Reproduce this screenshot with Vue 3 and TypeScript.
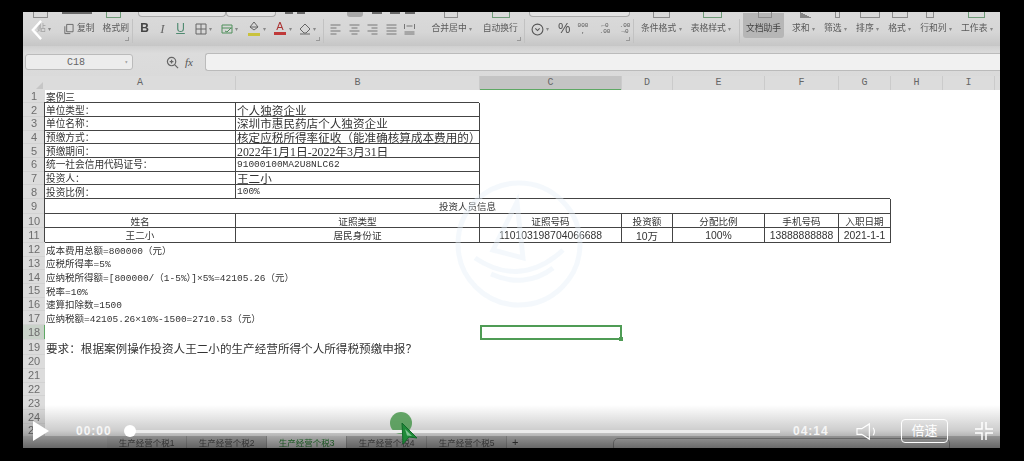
<template>
  <div class="page">
    <div class="screen">
      <!-- ribbon -->
      <div class="ribbon">
        <div class="stubs">
          <i
            v-for="s in stubs"
            :key="s.x"
            class="stub"
            :class="s.kind"
            :style="{ marginLeft: `${s.gap}px`, width: `${s.w}px` }"
          ></i>
        </div>
        <div class="bands">
          <div class="group clip-group">
            <span class="rb-text paste">贴 <small>▾</small></span>
            <svg class="ic copy-ic" viewBox="0 0 12 12"><path d="M4 1h7v8H4zM2 3v8h6" /></svg>
            <span class="rb-text">复制</span>
            <span class="rb-text brush">格式刷</span>
            <i class="launch"></i>
          </div>
          <div class="group font-group">
            <b class="fmt bold">B</b>
            <i class="fmt italic">I</i>
            <u class="fmt under">U</u>
            <span class="pair first">
              <svg class="ic" viewBox="0 0 12 12"><path d="M1 1h10v10H1zM6 1v10M1 6h10" /></svg>
              <small>▾</small>
            </span>
            <span class="pair">
              <svg class="ic green" viewBox="0 0 12 12"><path d="M1 2h10v8H1zM1 5h10M4 8l2 1 4-4" /></svg>
              <small>▾</small>
            </span>
            <span class="pair">
              <span class="bucket">
                <svg class="ic" viewBox="0 0 12 12"><path d="M6 1l4 5-4 3-4-3zM2 6h8" /></svg>
                <i class="bar yellow"></i>
              </span>
              <small>▾</small>
            </span>
            <span class="pair">
              <span class="bucket">
                <span class="font-a">A</span>
                <i class="bar red"></i>
              </span>
              <small>▾</small>
            </span>
            <span class="pair">
              <svg class="ic" viewBox="0 0 12 12"><path d="M6 1l5 5-4 4H5L1 6zM1 11h10" /></svg>
              <small>▾</small>
            </span>
            <i class="launch"></i>
          </div>
          <div class="group align-group">
            <svg v-for="a in alignIcons" :key="a" class="ic small" viewBox="0 0 12 12"><path :d="a" /></svg>
            <span class="rb-text merge">合并居中 <small>▾</small></span>
            <span class="rb-text">自动换行</span>
            <i class="launch"></i>
          </div>
          <div class="group num-group">
            <svg class="ic round" viewBox="0 0 12 12"><circle cx="6" cy="6" r="5" /><path d="M4 5l2 2 2-2" /></svg>
            <small class="caret">▾</small>
            <span class="percent">%</span>
            <span class="tiny">000<br />,</span>
            <span class="tiny wide">←0<br />.00</span>
            <span class="tiny">.00<br />→0</span>
            <i class="launch"></i>
          </div>
          <div class="group style-group">
            <span class="rb-text">条件格式 <small>▾</small></span>
            <span class="rb-text">表格样式 <small>▾</small></span>
          </div>
          <div class="group tools-group">
            <span class="rb-text helper">文档助手</span>
            <span v-for="t in tools" :key="t" class="rb-text">{{ t }} <small>▾</small></span>
          </div>
        </div>
      </div>

      <!-- formula bar -->
      <div class="formula">
        <div class="namebox"><span>C18</span><small>▾</small></div>
        <svg class="zoom-ic" viewBox="0 0 14 14">
          <circle cx="6" cy="6" r="4.5" />
          <path d="M9.500 9.500L13 13M4 6h4M6 4v4" />
        </svg>
        <span class="fx">fx</span>
        <div class="input"></div>
      </div>

      <!-- column headers -->
      <div class="sheet cols">
        <div class="corner"><i></i></div>
        <div v-for="c in columns" :key="c" class="col-head" :class="{ active: c === 'C' }">{{ c }}</div>
      </div>

      <!-- grid -->
      <div class="sheet grid">
        <template v-for="row in rows" :key="row.n">
          <div class="row-head" :class="{ active: row.n === 18 }">{{ row.n }}</div>
          <div
            v-for="(cell, i) in row.cells"
            :key="i"
            class="cell"
            :class="cell.cls"
            :style="{ gridColumn: `span ${cell.span || 1}` }"
          >{{ cell.text }}</div>
        </template>
      </div>

      <!-- sheet tabs -->
      <div class="tabs">
        <div class="tab-nav"></div>
        <div v-for="t in sheets" :key="t" class="tab" :class="{ on: t.endsWith('3') }">{{ t }}</div>
        <span class="add">+</span>
        <div class="hscroll"><i></i></div>
      </div>

      <!-- watermark in the video -->
      <svg class="mark" viewBox="0 0 128 128">
        <circle cx="64" cy="64" r="61" />
        <path d="M62 22l6 56-30-8zM20 78c30 20 60 18 88-8M36 94c22 10 44 8 62-6" />
      </svg>

      <!-- player overlay -->
      <div class="fade"></div>
      <svg class="back" viewBox="0 0 14 24"><path d="M12 2L3 12l9 10" /></svg>
      <div class="dot"></div>
      <div class="controls">
        <svg class="play" viewBox="0 0 16 20"><path d="M0 0l16 10L0 20z" /></svg>
        <span class="time first">00:00</span>
        <div class="track"><i></i></div>
        <span class="time">04:14</span>
        <svg class="sound" viewBox="0 0 22 20"><path d="M1 7h5l8-5v16l-8-5H1zM18 6c1.600 2.500 1.600 5.500 0 8" /></svg>
        <span class="speed">倍速</span>
        <svg class="shrink" viewBox="0 0 18 18"><path d="M7 0v7H0M11 0v7h7M7 18v-7H0M11 18v-7h7" /></svg>
      </div>
      <svg class="cursor" viewBox="0 0 20 24">
        <path d="M2 2l15 15-8-1-6 7z" />
        <path class="in" d="M5 8l7 7-5-.5z" />
      </svg>
    </div>
  </div>
</template>

<script setup lang="ts">
type Cell = { text?: string; span?: number; cls?: string };
type Row = { n: number; cells: Cell[] };

const columns = ['A', 'B', 'C', 'D', 'E', 'F', 'G', 'H', 'I'];
const tools = ['求和', '筛选', '排序', '格式', '行和列', '工作表'];
const sheets = ['生产经营个税1', '生产经营个税2', '生产经营个税3', '生产经营个税4', '生产经营个税5'];
const alignIcons = [
  'M1 2h10M1 5h6M1 8h10M1 11h6',
  'M1 2h10M3 5h6M1 8h10M3 11h6',
  'M1 2h10M5 5h6M1 8h10M5 11h6',
  'M1 2h10M1 5h10M1 8h10M1 11h10',
  'M1 1v5M11 1v5M3 3h6M1 9h10M1 11h10',
];

// bottoms of the ribbon icons that the video crop leaves visible, by page x
const stubSpots: [number, number, string][] = [
  [33, 15, 'box'], [62, 30, 'dark'], [106, 15, 'box green'], [138, 88, 'dd'], [226, 50, 'dd'],
  [285, 8, 'dark'], [297, 8, 'dark'], [347, 16, 'sel'], [372, 10, 'dark'], [390, 10, 'dark'], [405, 10, 'dark'],
  [444, 14, 'box'], [492, 18, 'box green'], [529, 101, 'dd'], [653, 17, 'box'], [703, 19, 'box green'],
  [758, 14, 'box'], [800, 12, 'dark thin'], [835, 5, 'box'], [860, 20, 'box'], [892, 16, 'box'],
  [926, 8, 'box'], [968, 17, 'box green'],
];
let stubEnd = 23;
const stubs = stubSpots.map(([x, w, kind]) => {
  const gap = x - stubEnd;
  stubEnd = x + w;
  return { x, w, kind, gap };
});

const info: [string, string, string?][] = [
  ['单位类型：', '个人独资企业'],
  ['单位名称：', '深圳市惠民药店个人独资企业'],
  ['预缴方式：', '核定应税所得率征收（能准确核算成本费用的）'],
  ['预缴期间：', '2022年1月1日-2022年3月31日', 'serif'],
  ['统一社会信用代码证号：', '91000100MA2U8NLC62', 'mono'],
  ['投资人：', '王二小'],
  ['投资比例：', '100%', 'mono'],
];
const notes = [
  '成本费用总额=800000（元）',
  '应税所得率=5%',
  '应纳税所得额=[800000/（1-5%）]×5%=42105.26（元）',
  '税率=10%',
  '速算扣除数=1500',
  '应纳税额=42105.26×10%-1500=2710.53（元）',
];
const headCols = ['姓名', '证照类型', '证照号码', '投资额', '分配比例', '手机号码', '入职日期'];
const valueCols: [string, string][] = [
  ['王二小', 'cjk'],
  ['居民身份证', 'cjk'],
  ['110103198704066688', 'num'],
  ['10万', 'num'],
  ['100%', 'num'],
  ['13888888888', 'num'],
  ['2021-1-1', 'num'],
];

const rows: Row[] = [{ n: 1, cells: [{ text: '案例三', span: 10, cls: 'small' }] }];
info.forEach(([label, value, cls], i) => {
  rows.push({
    n: i + 2,
    cells: [
      { text: label, cls: 'small line' },
      { text: value, cls: `big line ${cls || ''}` },
      { span: 8 },
    ],
  });
});
rows.push({ n: 9, cells: [{ text: '投资人员信息', span: 7, cls: 'center line banner' }, { span: 3 }] });
rows.push({
  n: 10,
  cells: [...headCols.map((text) => ({ text, cls: 'center line cjk' })), { span: 3 }],
});
rows.push({
  n: 11,
  cells: [...valueCols.map(([text, cls]) => ({ text, cls: `center line ${cls}` })), { span: 3 }],
});
notes.forEach((text, i) => {
  rows.push({ n: i + 12, cells: [{ text, span: 10, cls: 'mono-note' }] });
});
rows.push({ n: 18, cells: [{ span: 2 }, { cls: 'selected' }, { span: 7 }] });
rows.push({ n: 19, cells: [{ text: '要求：根据案例操作投资人王二小的生产经营所得个人所得税预缴申报？', span: 10, cls: 'ask' }] });
for (let n = 20; n <= 25; n++) rows.push({ n, cells: [{ span: 10 }] });
</script>

<style>
body {
  margin: 0;
  background: #000;
}
</style>

<style scoped>
.page {
  width: 1024px;
  height: 461px;
  box-sizing: border-box;
  padding: 12px 24px 13px 23px;
  background: #000;
  overflow: hidden;
  font-family: "Liberation Sans", "Noto Sans CJK SC", sans-serif;
  color: #333;
}
.screen {
  position: relative;
  height: 100%;
  display: flex;
  flex-direction: column;
  overflow: hidden;
  background: #fff;
}

/* ribbon */
.ribbon {
  height: 34px;
  flex: none;
  background: linear-gradient(#dadada, #d6d6d6 60%, #c6c6c6);
  filter: blur(0.5px);
  overflow: hidden;
}
.stubs {
  position: relative;
  z-index: 1;
  height: 7px;
  display: flex;
  align-items: flex-start;
}
.stub {
  flex: none;
  display: block;
  box-sizing: border-box;
}
.stub.box {
  height: 6px;
  border: 1px solid #8d8d8d;
  border-top: none;
}
.stub.box.green { border-color: #6f9a78; }
.stub.dark { height: 2px; background: #6a6a6a; }
.stub.dark.thin { height: 6px; background: linear-gradient(to top right, #888 50%, transparent 50%); }
.stub.sel { height: 5px; background: #a8a8a8; border-radius: 0 0 3px 3px; }
.stub.dd {
  height: 5px;
  border: 1px solid #aaa;
  border-top: none;
  border-radius: 0 0 4px 4px;
  background: #e2e2e2;
}
.bands { display: flex; }
.group {
  position: relative;
  flex: none;
  display: flex;
  align-items: flex-start;
  height: 24px;
  padding-top: 1px;
  box-sizing: border-box;
  border-right: 1px solid #c2c2c2;
}
.clip-group { width: 110px; padding-left: 14px; gap: 3px; }
.font-group { width: 191px; padding-left: 5px; gap: 5px; }
.align-group { width: 201px; padding-left: 5px; gap: 5.500px; }
.num-group { width: 109px; padding-left: 6px; gap: 5px; }
.style-group { width: 106px; padding-left: 7px; gap: 9px; }
.tools-group { width: 259px; border: none; gap: 9px; padding-left: 3px; }
.launch {
  position: absolute;
  right: 3px;
  bottom: 2px;
  width: 3px;
  height: 3px;
  border-right: 1px solid #999;
  border-bottom: 1px solid #999;
}
.rb-text {
  font-size: 8.800px;
  line-height: 17px;
  white-space: nowrap;
  color: #5a5a5a;
}
.rb-text small { font-size: 6px; color: #888; }
.paste { width: 19px; color: #a0a0a0; margin-right: 4px; }
.brush { margin-left: 5px; }
.merge { margin-left: 10px; margin-right: 5px; }
.helper {
  background: #b6b6b6;
  margin-top: -7px;
  margin-right: -1px;
  padding-top: 7px;
  padding-bottom: 1px;
  width: 41px;
  text-align: center;
  border-radius: 0 0 3px 3px;
  color: #444;
}
.ic {
  width: 12px;
  height: 12px;
  margin-top: 3px;
  flex: none;
  fill: none;
  stroke: #666;
  stroke-width: 1;
}
.ic.small { width: 13px; stroke: #777; }
.ic.green { stroke: #4e8f5a; }
.ic.round { width: 13px; height: 13px; stroke: #555; }
.copy-ic { width: 11px; }
.fmt {
  width: 13px;
  text-align: center;
  font-size: 12px;
  line-height: 17px;
  color: #444;
}
.italic { font-family: "Liberation Serif", serif; font-size: 13px; color: #666; }
.under { color: #4f8a70; }
.pair {
  width: 21px;
  flex: none;
  display: flex;
  gap: 2px;
}
.pair.first { margin-left: 3px; }
.pair small, .caret {
  font-size: 6px;
  line-height: 18px;
  color: #888;
}
.caret { margin-left: -3px; margin-right: 4px; }
.bucket {
  width: 14px;
  height: 15px;
  flex: none;
  display: flex;
  flex-direction: column;
  align-items: center;
}
.bucket .ic { margin-top: 1px; }
.bar { width: 12px; height: 3px; flex: none; }
.yellow { background: #c9c23c; }
.red { background: #c03a3a; }
.font-a { font-size: 11px; line-height: 12px; color: #a33; }
.percent { font-size: 14px; line-height: 17px; color: #555; margin-right: 1px; }
.tiny {
  font-size: 6px;
  line-height: 6px;
  width: 13px;
  padding-top: 3px;
  text-align: center;
  font-family: "Liberation Mono", monospace;
  color: #555;
}
.tiny.wide { margin: 0 2px 0 4px; }

/* formula bar */
.formula {
  height: 30px;
  flex: none;
  box-sizing: border-box;
  padding: 8px 0 6px 2px;
  display: flex;
  align-items: center;
  background: linear-gradient(#d0d0d0, #dcdcdc 25%, #dadada);
}
.namebox {
  width: 108px;
  height: 16px;
  box-sizing: border-box;
  display: flex;
  align-items: center;
  justify-content: space-between;
  padding: 0 4px 0 41px;
  background: #ececec;
  border: 1px solid #bbb;
  border-radius: 3px;
  font-size: 10px;
  font-family: "Liberation Mono", monospace;
  color: #666;
}
.namebox small { font-size: 6px; color: #999; }
.zoom-ic {
  width: 13px;
  height: 13px;
  margin-left: 33px;
  fill: none;
  stroke: #666;
  stroke-width: 1.300;
}
.fx {
  margin-left: 6px;
  width: 20px;
  font: italic 11px "Liberation Serif", serif;
  color: #555;
}
.input {
  flex: 1;
  height: 16px;
  background: #f1f1f1;
  border: 1px solid #bbb;
  border-right: none;
  border-radius: 3px 0 0 3px;
}

/* sheet */
.sheet {
  display: grid;
  grid-template-columns: 22px 191px 244px 142px 51px 92px 74px 52px 52px 52px 5px;
  flex: none;
}
.cols {
  height: 14px;
  background: #dcdcdc;
  box-sizing: border-box;
}
.corner { position: relative; }
.corner i {
  position: absolute;
  right: 2px;
  bottom: 1px;
  border-style: solid;
  border-width: 0 0 7px 7px;
  border-color: transparent transparent #c6c6c6;
}
.col-head {
  font: 10px/14px "Liberation Mono", monospace;
  text-align: center;
  color: #666;
  border-right: 1px solid #cbcbcb;
}
.col-head.active {
  background: #c4c4c4;
  box-shadow: inset 0 -1px #5ea864;
}
.grid {
  flex: 1;
  grid-template-rows: 13.300px repeat(7, 13.700px) repeat(3, 14.600px) repeat(6, 13.700px) 15px 15px repeat(6, 13.800px);
  align-content: start;
  overflow: hidden;
  filter: blur(0.4px);
}
.row-head {
  background: #dcdcdc;
  color: #6d6d6d;
  font-size: 11px;
  display: flex;
  align-items: center;
  justify-content: center;
  border-bottom: 1px solid #d2d2d2;
  box-sizing: border-box;
}
.row-head.active { background: #c9d2c9; box-shadow: inset -1px 0 #5ea864; }
.cell {
  min-width: 0;
  box-sizing: border-box;
  padding-left: 1px;
  white-space: nowrap;
  display: flex;
  align-items: center;
  font-size: 10px;
}
.small { font-size: 9.700px; }
.big { font-size: 11.600px; }
.serif { font-family: "Liberation Serif", "Noto Sans CJK SC", serif; font-size: 11.800px; }
.mono { font-family: "Liberation Mono", "Noto Sans CJK SC", monospace; font-size: 9.500px; }
.mono-note { font-family: "Liberation Mono", "Noto Sans CJK SC", monospace; font-size: 9.500px; }
.ask { font-size: 11.600px; }
.line {
  border-right: 1px solid #444;
  border-bottom: 1px solid #444;
  box-shadow: -1px -1px 0 0 #444;
}
.center { justify-content: center; padding: 0; }
.cjk { font-size: 9.600px; }
.num { font-size: 10.400px; }
.banner { font-size: 9.500px; }
.selected {
  border: 2px solid #4f9c55;
  position: relative;
}
.selected::after {
  content: "";
  position: absolute;
  right: -3px;
  bottom: -3px;
  width: 4px;
  height: 4px;
  background: #4f9c55;
}

/* tabs */
.tabs {
  height: 12px;
  flex: none;
  display: flex;
  background: #cfcfcf;
  font-size: 8.500px;
  line-height: 15px;
  color: #555;
  overflow: hidden;
  filter: blur(0.4px);
}
.tab-nav { width: 84px; }
.tab {
  width: 80px;
  text-align: center;
  box-sizing: border-box;
  border-right: 1px solid #aaa;
  background: #c6c6c6;
}
.tab.on {
  background: #efefef;
  color: #2f8f3a;
}
.add { margin-left: 5px; font-size: 11px; line-height: 12px; color: #444; }
.hscroll { flex: 1; padding: 2px 50px 0 95px; }
.hscroll i {
  display: block;
  height: 12px;
  background: #d4d4d4;
  border: 1px solid #999;
  border-radius: 5px;
}

/* watermark + player */
.mark {
  position: absolute;
  left: 432px;
  top: 168px;
  width: 128px;
  height: 128px;
  fill: none;
  stroke: #e6f0f8;
  stroke-width: 5;
  opacity: 0.42;
}
.fade {
  position: absolute;
  left: 0;
  right: 0;
  bottom: 0;
  height: 43px;
  background: linear-gradient(rgba(0, 0, 0, 0), rgba(0, 0, 0, 0.2) 60%, rgba(0, 0, 0, 0.5));
}
.back {
  position: absolute;
  left: 7px;
  top: 7px;
  width: 13px;
  height: 22px;
  fill: none;
  stroke: #fff;
  stroke-width: 2.600;
}
.controls {
  position: absolute;
  left: 10px;
  right: 7px;
  bottom: 5px;
  height: 24px;
  display: flex;
  align-items: center;
  color: #fff;
}
.play {
  width: 16px;
  height: 20px;
  flex: none;
  fill: #fff;
}
.time {
  font-size: 12px;
  font-weight: 700;
  letter-spacing: 1px;
  color: #f6f6f6;
  width: 52px;
  flex: none;
  white-space: nowrap;
}
.time.first { margin-left: 27px; }
.track {
  flex: 1;
  height: 3px;
  background: #ececec;
  margin: 0 13px 0 2px;
  position: relative;
}
.track i {
  position: absolute;
  left: -6px;
  top: -4.500px;
  width: 12px;
  height: 12px;
  border-radius: 50%;
  background: #fff;
}
.sound {
  width: 21px;
  height: 19px;
  margin-left: 11px;
  fill: none;
  stroke: #fff;
  stroke-width: 1.200;
  flex: none;
}
.speed {
  margin-left: 24px;
  width: 47px;
  height: 24px;
  box-sizing: border-box;
  border: 1px solid #fff;
  border-radius: 4px;
  font-size: 13px;
  line-height: 22px;
  text-align: center;
  flex: none;
}
.shrink {
  margin-left: 27px;
  width: 18px;
  height: 18px;
  fill: none;
  stroke: #fff;
  stroke-width: 1.500;
  flex: none;
}
.dot {
  position: absolute;
  left: 367px;
  top: 400px;
  width: 22px;
  height: 22px;
  border-radius: 50%;
  background: rgba(74, 150, 78, 0.85);
}
.cursor {
  position: absolute;
  left: 377px;
  top: 409px;
  width: 20px;
  height: 24px;
  fill: #1f8a38;
  stroke: #12692a;
  stroke-width: 1;
}
.cursor .in { fill: #7fc592; stroke: none; }
</style>
